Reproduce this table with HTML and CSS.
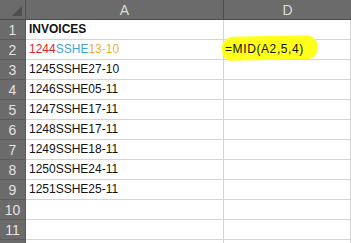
FILE: index.html
```html
<!DOCTYPE html>
<html>
<head>
<meta charset="utf-8">
<link rel="stylesheet" href="styles.css">
</head>
<body>
<div class="sheet">
  <div class="corner"><span class="tri"></span></div>
  <div class="colhead colA">A</div>
  <div class="colhead colD">D</div>

  <div class="rowhead">1</div><div class="cell bold">INVOICES</div><div class="cell"></div>
  <div class="rowhead">2</div><div class="cell"><span class="red">1244</span><span class="blue">SSHE</span><span class="gold">13-10</span></div><div class="cell formula"><span class="hl"></span><span class="ftext">=MID(A2,5,4)</span></div>
  <div class="rowhead">3</div><div class="cell">1245SSHE27-10</div><div class="cell"></div>
  <div class="rowhead">4</div><div class="cell">1246SSHE05-11</div><div class="cell"></div>
  <div class="rowhead">5</div><div class="cell">1247SSHE17-11</div><div class="cell"></div>
  <div class="rowhead">6</div><div class="cell">1248SSHE17-11</div><div class="cell"></div>
  <div class="rowhead">7</div><div class="cell">1249SSHE18-11</div><div class="cell"></div>
  <div class="rowhead">8</div><div class="cell">1250SSHE24-11</div><div class="cell"></div>
  <div class="rowhead">9</div><div class="cell">1251SSHE25-11</div><div class="cell"></div>
  <div class="rowhead">10</div><div class="cell"></div><div class="cell"></div>
  <div class="rowhead">11</div><div class="cell"></div><div class="cell"></div>
  <div class="rowhead stub"></div><div class="cell stub"></div><div class="cell stub"></div>
</div>
</body>
</html>
```
FILE: styles.css
```css
html, body {
  margin: 0;
  padding: 0;
  background: #ffffff;
  overflow: hidden;
}
body {
  width: 351px;
  height: 243px;
  font-family: "Liberation Sans", Arial, sans-serif;
}
.sheet {
  display: grid;
  grid-template-columns: 26px 198px 127px;
  grid-template-rows: repeat(12, 20px) 3px;
  width: 351px;
  height: 243px;
  overflow: hidden;
}
.corner {
  background: #6b6b6b;
  border-right: 1px solid #555555;
  border-bottom: 1px solid #4a4a4a;
  display: flex;
  justify-content: flex-end;
  align-items: flex-end;
  padding: 0 3px 3px 0;
}
.tri {
  width: 0;
  height: 0;
  border-left: 10px solid transparent;
  border-bottom: 10px solid #4e4e4e;
}
.colhead {
  background: #6b6b6b;
  color: #dcdcdc;
  font-size: 14px;
  display: flex;
  align-items: center;
  justify-content: center;
  border-bottom: 1px solid #4a4a4a;
}
.colA {
  border-right: 1px solid #4f4f4f;
}
.rowhead {
  background: #6b6b6b;
  color: #e2e2e2;
  font-size: 14px;
  display: flex;
  align-items: flex-end;
  justify-content: center;
  padding-bottom: 1px;
  border-right: 1px solid #5a5a5a;
  border-bottom: 1px solid #5c5c5c;
}
.cell {
  border-right: 1px solid #d4d4d4;
  border-bottom: 1px solid #d4d4d4;
  font-size: 12px;
  color: #111111;
  padding: 0 0 3px 3px;
  display: flex;
  align-items: flex-end;
  white-space: nowrap;
}
.stub {
  border-bottom: none;
  padding: 0;
}
.bold {
  font-weight: bold;
}
.red { color: #e21f26; }
.blue { color: #3aa6d9; }
.gold { color: #f2ae2e; }
.formula {
  position: relative;
  padding-left: 1px;
}
.ftext {
  position: relative;
  letter-spacing: 0.6px;
}
.hl {
  position: absolute;
  left: -2px;
  top: -4px;
  width: 96px;
  height: 24px;
  background: #ffff1a;
  border-radius: 11px 12px 12px 9px;
  transform: rotate(-1deg);
}
```
